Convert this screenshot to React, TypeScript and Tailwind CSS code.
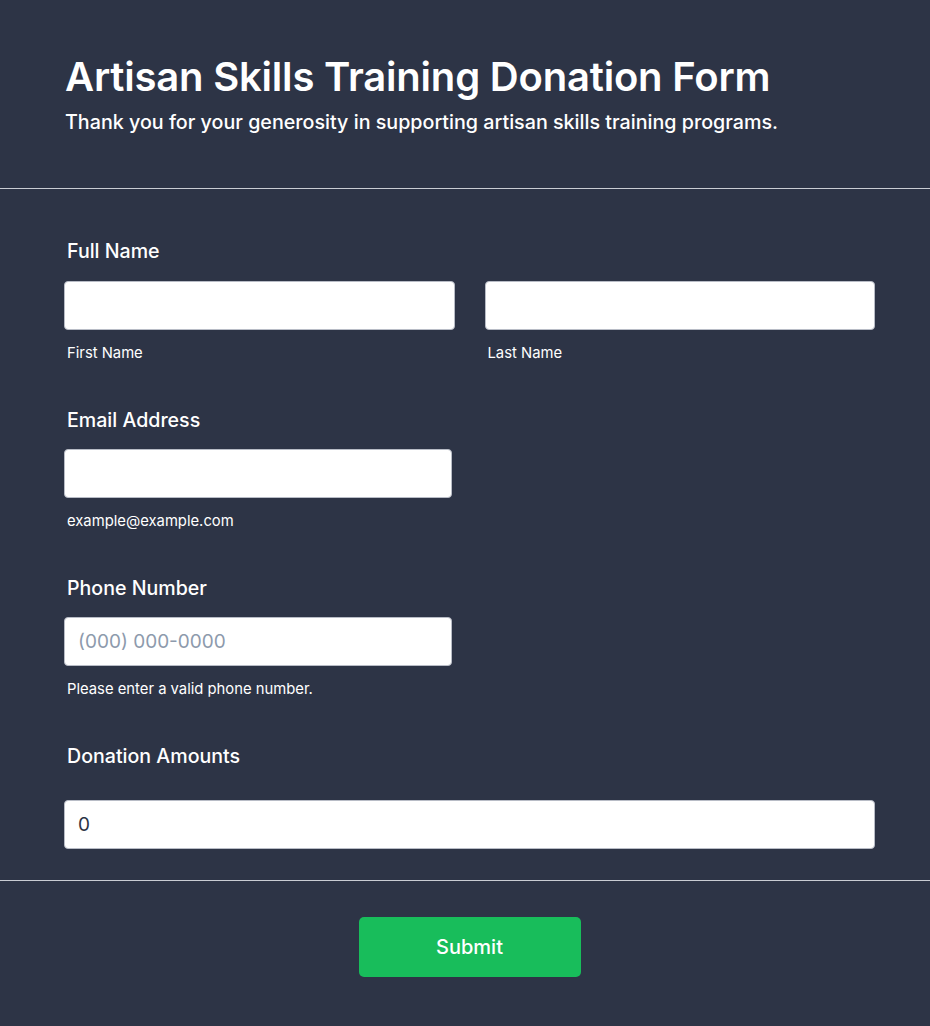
import React from "react";

const font = { fontFamily: "Inter, 'Noto Sans', sans-serif" };

function Field({ className = "", placeholder = "", value }: { className?: string; placeholder?: string; value?: string }) {
  return (
    <input
      type="text"
      readOnly
      defaultValue={value}
      placeholder={placeholder}
      className={`block h-[49px] rounded-[4px] border border-[#b8bcc6] bg-white px-[13px] text-[19px] text-[#2c3345] placeholder:text-[#8d9aac] outline-none ${className}`}
    />
  );
}

export default function App() {
  return (
    <div className="w-full bg-[#2d3446] text-white" style={font}>
      <header className="pl-[65px] pr-[55px] pt-[53px] pb-[52px]">
        <h1 className="text-[40px] font-semibold leading-[48px] tracking-[-0.2px]">Artisan Skills Training Donation Form</h1>
        <p className="mt-[7px] text-[19.7px] leading-[28px] font-medium">Thank you for your generosity in supporting artisan skills training programs.</p>
      </header>
      <div className="h-px bg-[#c9ccd3]" />
      <form className="pl-[64px] pr-[55px] pt-[50px] pb-[31px] flex flex-col">
        <div>
          <label className="block pl-[3px] text-[19.6px] font-medium leading-[24px]">Full Name</label>
          <div className="mt-[18px] flex gap-[30px]">
            <div className="flex-1 flex flex-col">
              <Field className="w-full" />
              <span className="mt-[13px] pl-[3px] text-[14.8px] leading-[20px]">First Name</span>
            </div>
            <div className="flex-1 flex flex-col">
              <Field className="w-full" />
              <span className="mt-[13px] pl-[3px] text-[14.8px] leading-[20px]">Last Name</span>
            </div>
          </div>
        </div>
        <div className="mt-[45px]">
          <label className="block pl-[3px] text-[19.6px] font-medium leading-[24px]">Email Address</label>
          <div className="mt-[17px] flex flex-col">
            <Field className="w-[388px]" />
            <span className="mt-[13px] pl-[3px] text-[14.8px] leading-[20px]">example@example.com</span>
          </div>
        </div>
        <div className="mt-[45px]">
          <label className="block pl-[3px] text-[19.6px] font-medium leading-[24px]">Phone Number</label>
          <div className="mt-[17px] flex flex-col">
            <Field className="w-[388px]" placeholder="(000) 000-0000" />
            <span className="mt-[13px] pl-[3px] text-[14.8px] leading-[20px]">Please enter a valid phone number.</span>
          </div>
        </div>
        <div className="mt-[45px]">
          <label className="block pl-[3px] text-[19.6px] font-medium leading-[24px]">Donation Amounts</label>
          <Field className="mt-[32px] w-full" value="0" />
        </div>
      </form>
      <div className="h-px bg-[#c9ccd3]" />
      <div className="flex justify-center pl-[64px] pr-[55px] pt-[36px] pb-[49px]">
        <button type="button" className="h-[60px] w-[222px] rounded-[5px] bg-[#18bd5b] text-[20px] font-medium text-white">Submit</button>
      </div>
    </div>
  );
}
